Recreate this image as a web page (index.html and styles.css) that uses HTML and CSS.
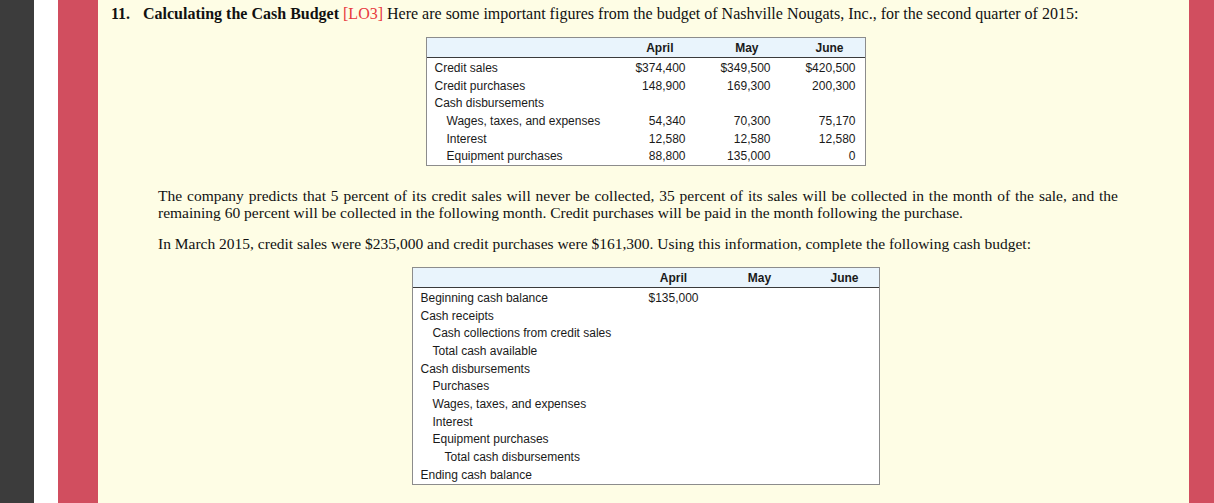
FILE: index.html
```html
<!DOCTYPE html>
<html>
<head>
<meta charset="utf-8">
<link rel="stylesheet" href="styles.css">
</head>
<body>
<div class="frame">
  <div class="strip-dark"></div>
  <div class="strip-white"></div>
  <div class="rail"></div>
  <main class="content">
    <h1 class="problem"><span class="qnum">11.</span><span class="title">Calculating the Cash Budget</span> <span class="lo">[LO3]</span> Here are some important figures from the budget of Nashville Nougats, Inc., for the second quarter of 2015:</h1>

    <div class="table-wrap">
      <div class="data-table t1">
        <div class="row head">
          <div class="cell label"></div>
          <div class="cell hnum">April</div>
          <div class="cell hnum">May</div>
          <div class="cell hnum">June</div>
        </div>
        <div class="body">
          <div class="row">
            <div class="cell label">Credit sales</div>
            <div class="cell num">$374,400</div>
            <div class="cell num">$349,500</div>
            <div class="cell num">$420,500</div>
          </div>
          <div class="row">
            <div class="cell label">Credit purchases</div>
            <div class="cell num">148,900</div>
            <div class="cell num">169,300</div>
            <div class="cell num">200,300</div>
          </div>
          <div class="row">
            <div class="cell label">Cash disbursements</div>
            <div class="cell num"></div>
            <div class="cell num"></div>
            <div class="cell num"></div>
          </div>
          <div class="row">
            <div class="cell label ind1">Wages, taxes, and expenses</div>
            <div class="cell num">54,340</div>
            <div class="cell num">70,300</div>
            <div class="cell num">75,170</div>
          </div>
          <div class="row">
            <div class="cell label ind1">Interest</div>
            <div class="cell num">12,580</div>
            <div class="cell num">12,580</div>
            <div class="cell num">12,580</div>
          </div>
          <div class="row">
            <div class="cell label ind1">Equipment purchases</div>
            <div class="cell num">88,800</div>
            <div class="cell num">135,000</div>
            <div class="cell num">0</div>
          </div>
        </div>
      </div>
    </div>

    <p class="text p1">The company predicts that 5 percent of its credit sales will never be collected, 35 percent of its sales will be collected in the month of the sale, and the remaining 60 percent will be collected in the following month. Credit purchases will be paid in the month following the purchase.</p>
    <p class="text p2">In March 2015, credit sales were $235,000 and credit purchases were $161,300. Using this information, complete the following cash budget:</p>

    <div class="table-wrap">
      <div class="data-table t2">
        <div class="row head">
          <div class="cell label"></div>
          <div class="cell hc">April</div>
          <div class="cell hc">May</div>
          <div class="cell hr">June</div>
        </div>
        <div class="body">
          <div class="row"><div class="cell label">Beginning cash balance</div><div class="cell c">$135,000</div><div class="cell"></div><div class="cell"></div></div>
          <div class="row"><div class="cell label">Cash receipts</div><div class="cell"></div><div class="cell"></div><div class="cell"></div></div>
          <div class="row"><div class="cell label ind1">Cash collections from credit sales</div><div class="cell"></div><div class="cell"></div><div class="cell"></div></div>
          <div class="row"><div class="cell label ind1">Total cash available</div><div class="cell"></div><div class="cell"></div><div class="cell"></div></div>
          <div class="row"><div class="cell label">Cash disbursements</div><div class="cell"></div><div class="cell"></div><div class="cell"></div></div>
          <div class="row"><div class="cell label ind1">Purchases</div><div class="cell"></div><div class="cell"></div><div class="cell"></div></div>
          <div class="row"><div class="cell label ind1">Wages, taxes, and expenses</div><div class="cell"></div><div class="cell"></div><div class="cell"></div></div>
          <div class="row"><div class="cell label ind1">Interest</div><div class="cell"></div><div class="cell"></div><div class="cell"></div></div>
          <div class="row"><div class="cell label ind1">Equipment purchases</div><div class="cell"></div><div class="cell"></div><div class="cell"></div></div>
          <div class="row"><div class="cell label ind2">Total cash disbursements</div><div class="cell"></div><div class="cell"></div><div class="cell"></div></div>
          <div class="row"><div class="cell label">Ending cash balance</div><div class="cell"></div><div class="cell"></div><div class="cell"></div></div>
        </div>
      </div>
    </div>
  </main>
  <div class="rail rail-right"></div>
</div>
</body>
</html>
```
FILE: styles.css
```css
html, body {
  margin: 0;
  padding: 0;
  height: 100%;
}
body {
  background: #fefde5;
  overflow: hidden;
}
.frame {
  display: flex;
  height: 503px;
}
.strip-dark {
  width: 34px;
  background: #3c3c3c;
  flex: none;
}
.strip-white {
  width: 24px;
  background: #ffffff;
  flex: none;
}
.rail {
  width: 40px;
  background: #d14e5f;
  flex: none;
}
.rail-right {
  width: 25px;
}
.content {
  flex: 1;
  background: #fefde5;
  padding: 5px 0 0 0;
  font-family: "Liberation Serif", "Times New Roman", serif;
  color: #111;
}
.problem {
  margin: 0 0 0 13px;
  font-size: 16px;
  line-height: 17px;
  font-weight: normal;
  white-space: nowrap;
}
.problem .qnum {
  display: inline-block;
  width: 32px;
  font-weight: bold;
}
.problem .title {
  font-weight: bold;
}
.problem .lo {
  color: #e8373d;
}
.table-wrap {
  display: flex;
  justify-content: center;
  padding-left: 4px;
}
.t1 {
  margin-top: 15px;
  width: 438px;
}
.t2 {
  margin-top: 15px;
  width: 466px;
}
.data-table {
  border: 1px solid #8c8c8c;
  background: #ffffff;
  font-family: "Liberation Sans", Arial, sans-serif;
  font-size: 12px;
  color: #1a1a1a;
}
.row {
  display: grid;
  height: 17.7px;
  align-items: center;
}
.t1 .row {
  grid-template-columns: 1fr 85px 85px 85px;
  padding-right: 9px;
}
.t2 .row {
  grid-template-columns: 1fr 86px 86px 76px;
}
.row.head {
  height: 19px;
  background: #e9f4fc;
  border-bottom: 1px solid #3a3a3a;
  font-weight: bold;
}
.t1 .body {
  padding-top: 1px;
}
.t2 .body {
  padding-top: 1px;
}
.cell {
  white-space: nowrap;
}
.label {
  padding-left: 8px;
}
.label.ind1 {
  padding-left: 20px;
}
.label.ind2 {
  padding-left: 32px;
}
.num {
  text-align: right;
}
.hnum {
  text-align: right;
  padding-right: 12px;
}
.hc, .c {
  text-align: center;
}
.hr {
  text-align: right;
  padding-right: 20px;
}
.text {
  font-size: 15.5px;
  line-height: 17px;
  text-align: justify;
  margin: 0;
  padding: 0 71px 0 60px;
}
.p1 {
  margin-top: 21px;
}
.p2 {
  margin-top: 14px;
}
```
